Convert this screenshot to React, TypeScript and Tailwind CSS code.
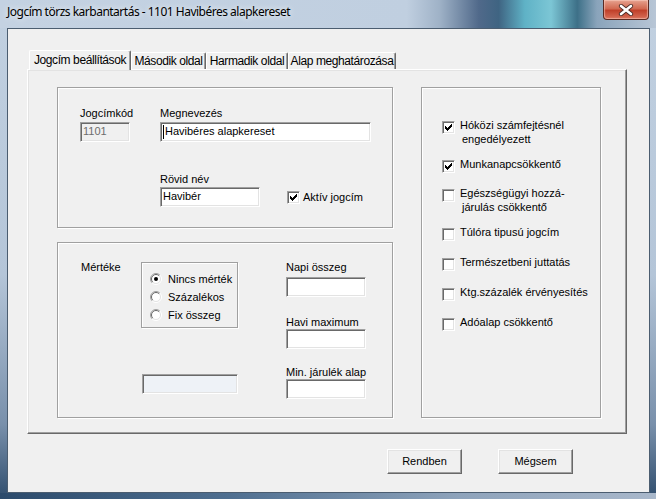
import React from "react";

// classic 3D edges
const sunken =
  "border border-t-[#a0a0a0] border-l-[#a0a0a0] border-b-white border-r-white shadow-[inset_1px_1px_0_#696969,inset_-1px_-1px_0_#e3e3e3]";
const raised =
  "border border-t-white border-l-white border-b-[#696969] border-r-[#696969] shadow-[inset_-1px_-1px_0_#a0a0a0,inset_1px_1px_0_#e3e3e3]";
const etched =
  "border border-[#a0a0a0] shadow-[inset_1px_1px_0_#fff,1px_1px_0_#fff]";

function TextBox({
  className,
  value,
  caret,
  disabled,
}: {
  className: string;
  value?: string;
  caret?: boolean;
  disabled?: boolean;
}) {
  return (
    <div className={`${sunken} ${className} flex items-start pl-[2px] pt-[2px] leading-[13px]`}>
      {caret && <span className="w-px h-[14px] bg-black mr-[1px]" />}
      <span className={disabled ? "text-[#6d6d6d]" : "text-black"}>{value}</span>
    </div>
  );
}

function CheckBox({ checked }: { checked?: boolean }) {
  return (
    <span className={`${sunken} w-[13px] h-[13px] shrink-0 bg-white flex`}>
      {checked && (
        <svg width="11" height="11" viewBox="0 0 11 11" shapeRendering="crispEdges">
          <path
            d="M8 2h1v1h-1z M7 3h2v1h-2z M2 4h1v1h-1z M6 4h3v1h-3z M2 5h2v1h-2z M5 5h3v1h-3z M2 6h5v1h-5z M3 7h3v1h-3z M4 8h1v1h-1z"
            fill="#000"
          />
        </svg>
      )}
    </span>
  );
}

function Radio({ selected }: { selected?: boolean }) {
  return (
    <svg width="12" height="12" viewBox="0 0 12 12" className="shrink-0">
      <circle cx="6" cy="6" r="5" fill="#fff" />
      <path d="M2.1 9.9 A5.5 5.5 0 0 1 9.9 2.1" fill="none" stroke="#a0a0a0" strokeWidth="1" />
      <path d="M2.8 9.2 A4.5 4.5 0 0 1 9.2 2.8" fill="none" stroke="#696969" strokeWidth="1" />
      <path d="M9.9 2.1 A5.5 5.5 0 0 1 2.1 9.9" fill="none" stroke="#ffffff" strokeWidth="1" />
      <path d="M9.2 2.8 A4.5 4.5 0 0 1 2.8 9.2" fill="none" stroke="#e3e3e3" strokeWidth="1" />
      {selected && <circle cx="6" cy="6" r="2" fill="#000" />}
    </svg>
  );
}

function CheckRow({
  lines,
  checked,
  className,
}: {
  lines: string[];
  checked?: boolean;
  className: string;
}) {
  return (
    <div className={`flex items-start ${className}`}>
      <div className="pt-[3px]">
        <CheckBox checked={checked} />
      </div>
      <div className="ml-[5px] leading-[14px] whitespace-nowrap">
        <div>{lines[0]}</div>
        {lines[1] && <div className="pl-[2px]">{lines[1]}</div>}
      </div>
    </div>
  );
}

export default function App() {
  return (
    <div className="w-[656px] h-[499px] flex flex-col bg-[linear-gradient(to_bottom,#c2d1e1_0%,#b4c5d8_55%,#7990ab_85%,#2f4d6d_100%)] font-['Liberation_Sans',Arial,sans-serif] text-[11px] text-black overflow-hidden">
      {/* title bar */}
      <div className="h-[28px] flex items-start bg-[linear-gradient(90deg,#c4d2e2_0%,#c0cfe0_62%,#9fb2c7_67%,#50698a_73%,#3f6482_76%,#5fb2c6_80%,#7cc6d5_84%,#3d7088_88%,#8aa4bb_91%,#b8c6d6_100%)]">
        <div className="flex-1 pl-[7px] pt-[4px] leading-[16px] text-[12px] tracking-[-0.5px] font-['Noto_Sans',sans-serif] [text-shadow:0_0_6px_rgba(255,255,255,0.95)] whitespace-nowrap">
          Jogcím törzs karbantartás - 1101 Havibéres alapkereset
        </div>
        <div className="mr-[7px] w-[46px] h-[20px] rounded-b-[4px] border border-t-0 border-[#5b2a22] bg-[linear-gradient(to_bottom,#e6a28f_0%,#d26a52_45%,#c0402a_55%,#d9705a_100%)] flex items-center justify-center shadow-[inset_0_0_1px_1px_rgba(255,220,210,0.5)]">
          <svg width="16" height="12" viewBox="0 0 16 12">
            <path d="M3 2 L13 10 M13 2 L3 10" stroke="#4a2a25" strokeWidth="4.2" strokeLinecap="round" />
            <path d="M3 2 L13 10 M13 2 L3 10" stroke="#ffffff" strokeWidth="2.6" strokeLinecap="round" />
          </svg>
        </div>
      </div>

      <div className="flex">
        <div className="w-[7px]" />
        {/* client area */}
        <div className="w-[643px] h-[465px] border border-[#4b5d70] bg-[#f0f0f0] flex flex-col">
          <div className="ml-[19px] mt-[21px] flex flex-col">
            {/* tabs */}
            <div className="flex items-end pl-[2px] h-[19px] text-[12px] tracking-[-0.4px] leading-[14px] whitespace-nowrap">
              <div className="relative z-10 -mb-px w-[102px] h-[20px] bg-[#f0f0f0] border border-b-0 border-t-white border-l-white border-r-[#696969] shadow-[inset_-1px_0_0_#a0a0a0] rounded-t-[2px] flex justify-center pt-[2px]">
                Jogcím beállítások
              </div>
              <div className="w-[75px] h-[17px] border border-b-0 border-t-white border-l-white border-r-[#696969] shadow-[inset_-1px_0_0_#a0a0a0] rounded-t-[2px] flex justify-center pt-[1px]">
                Második oldal
              </div>
              <div className="w-[82px] h-[17px] border border-b-0 border-t-white border-l-white border-r-[#696969] shadow-[inset_-1px_0_0_#a0a0a0] rounded-t-[2px] flex justify-center pt-[1px]">
                Harmadik oldal
              </div>
              <div className="w-[108px] h-[17px] border border-b-0 border-t-white border-l-white border-r-[#696969] shadow-[inset_-1px_0_0_#a0a0a0] rounded-t-[2px] flex justify-center pt-[1px]">
                Alap meghatározása
              </div>
            </div>

            {/* tab page */}
            <div className={`${raised} w-[600px] h-[365px] flex pl-[29px] pt-[17px]`}>
              <div className="w-[336px] flex flex-col">
                {/* upper group */}
                <div className={`${etched} h-[141px] pl-[22px] pt-[19px] leading-[13px]`}>
                  <div className="flex">
                    <div className="w-[80px]">
                      <div>Jogcímkód</div>
                      <TextBox className="mt-[2px] w-[50px] h-[20px] bg-[#f0f0f0]" value="1101" disabled />
                    </div>
                    <div>
                      <div>Megnevezés</div>
                      <TextBox className="mt-[2px] w-[211px] h-[20px] bg-white" value="Havibéres alapkereset" caret />
                    </div>
                  </div>
                  <div className="ml-[80px] mt-[31px]">
                    <div>Rövid név</div>
                    <div className="mt-px flex items-center">
                      <TextBox className="w-[100px] h-[20px] bg-white" value="Havibér" />
                      <div className="ml-[27px]">
                        <CheckBox checked />
                      </div>
                      <span className="ml-[3px]">Aktív jogcím</span>
                    </div>
                  </div>
                </div>

                {/* lower group */}
                <div className={`${etched} mt-[14px] h-[176px] flex pl-[23px] leading-[13px] whitespace-nowrap`}>
                  <div className="w-[60px] pt-[18px]">Mértéke</div>
                  <div className="w-[97px] flex flex-col">
                    <div className={`${etched} mt-[19px] h-[66px] pl-[8px] pt-[7px]`}>
                      <div className="flex items-center h-[18px]">
                        <Radio selected />
                        <span className="ml-[6px]">Nincs mérték</span>
                      </div>
                      <div className="flex items-center h-[18px]">
                        <Radio />
                        <span className="ml-[6px]">Százalékos</span>
                      </div>
                      <div className="flex items-center h-[18px]">
                        <Radio />
                        <span className="ml-[6px]">Fix összeg</span>
                      </div>
                    </div>
                    <TextBox className="mt-[46px] ml-px w-[96px] h-[20px] bg-[#eef2f7]" />
                  </div>
                  <div className="ml-[48px] w-[80px]">
                    <div className="mt-[18px]">Napi összeg</div>
                    <TextBox className="mt-[3px] w-[80px] h-[20px] bg-white" />
                    <div className="mt-[19px]">Havi maximum</div>
                    <TextBox className="w-[80px] h-[20px] bg-white" />
                    <div className="mt-[17px]">Min. járulék alap</div>
                    <TextBox className="w-[80px] h-[20px] bg-white" />
                  </div>
                </div>
              </div>

              {/* right group */}
              <div className={`${etched} ml-[28px] w-[180px] h-[331px] pl-[20px] pt-[30px] flex flex-col`}>
                <CheckRow checked lines={["Hóközi számfejtésnél", "engedélyezett"]} className="" />
                <CheckRow checked lines={["Munkanapcsökkentő"]} className="mt-[11px]" />
                <CheckRow lines={["Egészségügyi hozzá-", "járulás csökkentő"]} className="mt-[13px]" />
                <CheckRow lines={["Túlóra tipusú jogcím"]} className="mt-[11px]" />
                <CheckRow lines={["Természetbeni juttatás"]} className="mt-[14px]" />
                <CheckRow lines={["Ktg.százalék érvényesítés"]} className="mt-[14px]" />
                <CheckRow lines={["Adóalap csökkentő"]} className="mt-[14px]" />
              </div>
            </div>
          </div>

          {/* buttons */}
          <div className="mt-[15px] pl-[379px] flex">
            <div className={`${raised} w-[75px] h-[25px] flex items-center justify-center bg-[#f0f0f0]`}>Rendben</div>
            <div className={`${raised} ml-[36px] w-[75px] h-[25px] flex items-center justify-center bg-[#f0f0f0]`}>Mégsem</div>
          </div>
        </div>
        <div className="w-[6px]" />
      </div>
      <div className="h-[6px] bg-[linear-gradient(90deg,#2b4a6b_0%,#4f6f90_35%,#8ea3bb_70%,#a9b8cb_100%)]" />
    </div>
  );
}
